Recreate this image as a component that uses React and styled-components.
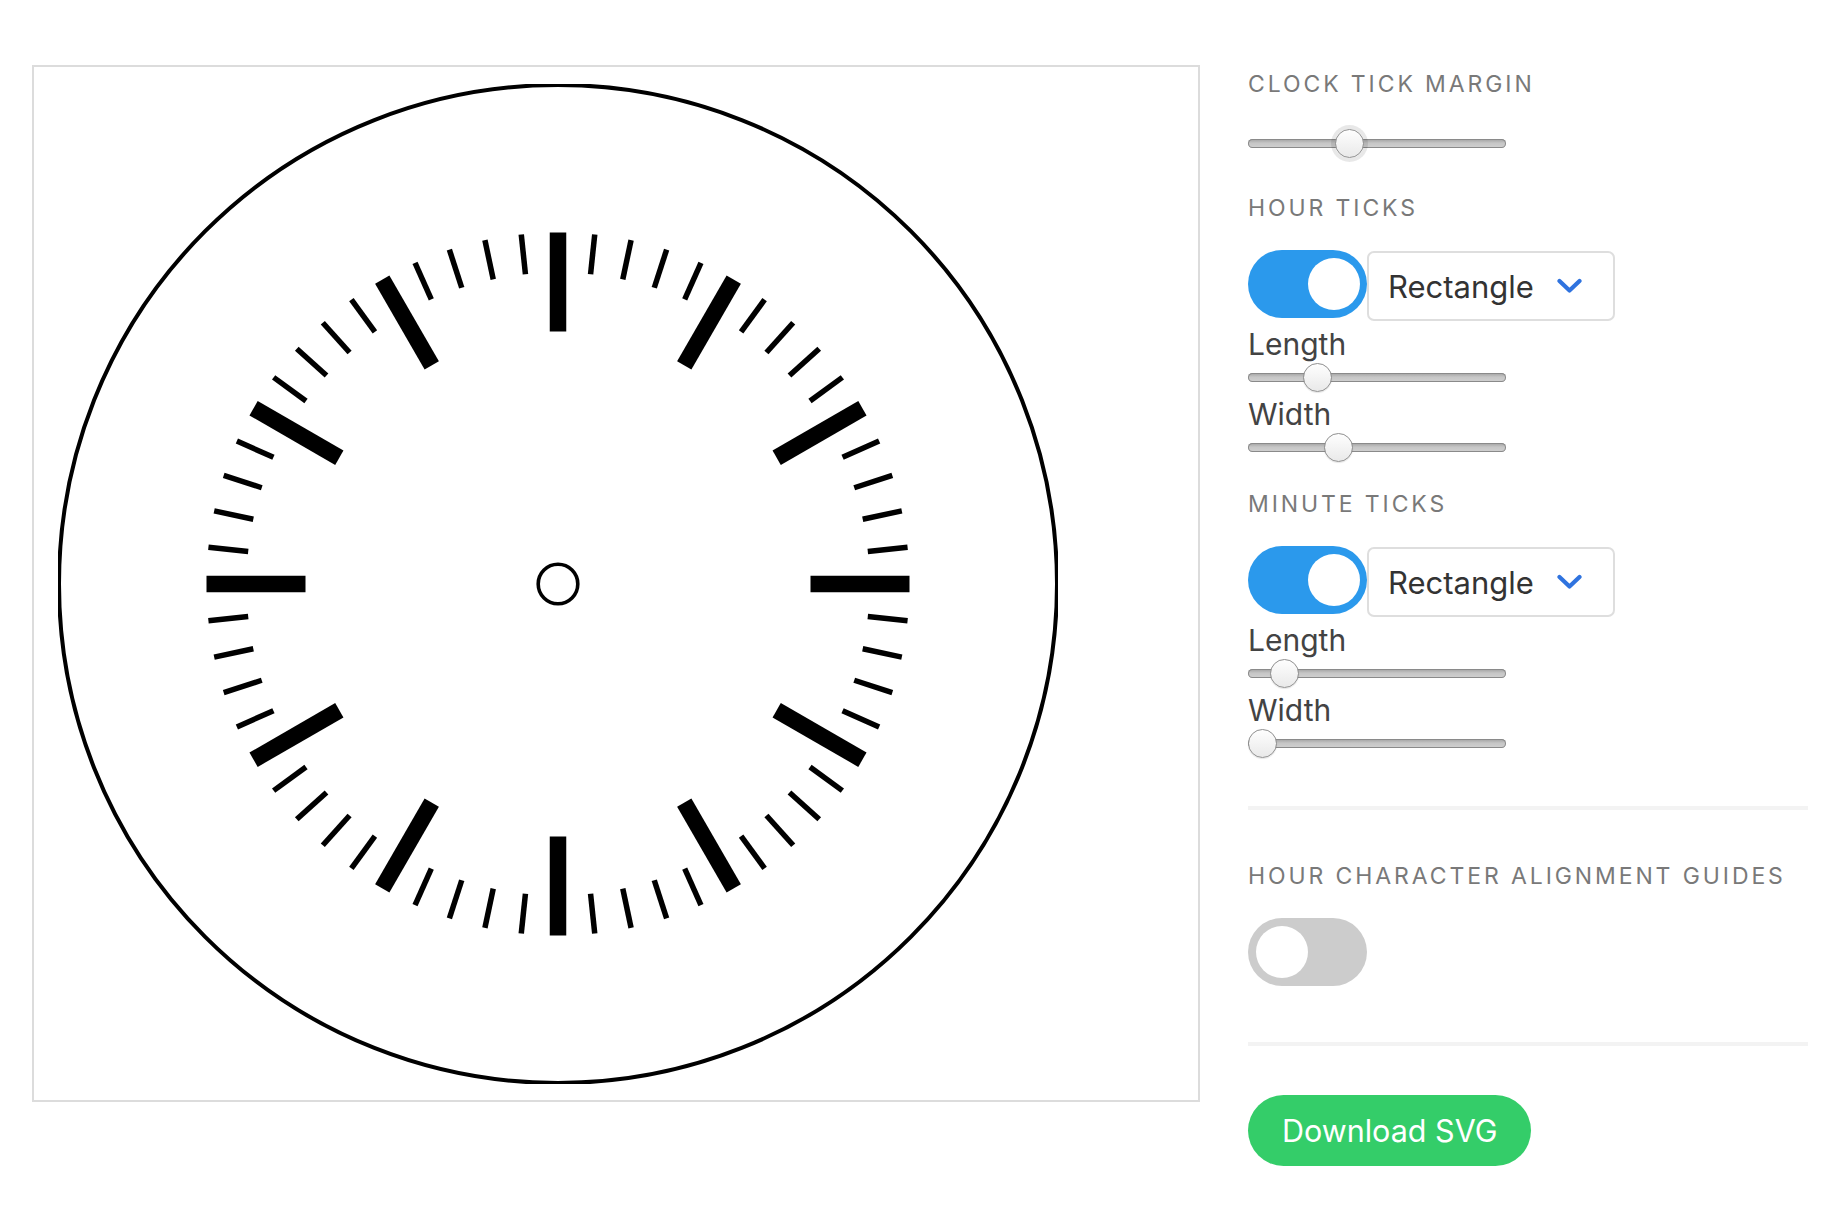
import React, { useState } from 'react';
import styled, { createGlobalStyle } from 'styled-components';

const GlobalStyle = createGlobalStyle`
  html, body {
    margin: 0;
    padding: 0;
    background: #fff;
  }
  body {
    font-family: Inter, "Helvetica Neue", "Liberation Sans", Arial, sans-serif;
    -webkit-font-smoothing: antialiased;
  }
`;

// Page: canvas on the left, controls on the right
const Page = styled.div`
  display: flex;
  align-items: flex-start;
  gap: 48px;
  padding: 65px 0 0 32px;
`;

const CanvasBox = styled.div`
  box-sizing: border-box;
  width: 1168px;
  height: 1037px;
  border: 2px solid #dcdcdc;
  display: flex;
  align-items: center;
  padding-left: 24px;
  flex-shrink: 0;
`;

const Sidebar = styled.div`
  display: flex;
  flex-direction: column;
  align-items: flex-start;
  width: 560px;
`;

const SectionLabel = styled.div`
  margin-top: ${p => p.$top}px;
  font-size: 23px;
  line-height: 28px;
  letter-spacing: 2.9px;
  color: #797979;
  text-transform: uppercase;
  white-space: nowrap;
`;

const FieldLabel = styled.div`
  margin-top: ${p => p.$top}px;
  font-size: 30px;
  line-height: 34px;
  color: #434343;
`;

const Range = styled.input.attrs({ type: 'range' })`
  -webkit-appearance: none;
  appearance: none;
  display: block;
  width: 258px;
  height: 30px;
  margin: ${p => p.$top}px 0 0 0;
  padding: 0;
  background: transparent;
  outline: none;

  &::-webkit-slider-runnable-track {
    height: 9px;
    border-radius: 5px;
    background: linear-gradient(#a0a0a0, #c6c6c6 45%, #d0d0d0);
    box-shadow: inset 0 0 0 1px #8a8a8a;
  }

  &::-webkit-slider-thumb {
    -webkit-appearance: none;
    appearance: none;
    box-sizing: border-box;
    width: 29px;
    height: 29px;
    margin-top: -10px;
    border-radius: 50%;
    background: linear-gradient(#fefefe, #e9e9e9);
    border: 1.5px solid #8f8f8f;
    box-shadow: ${p => (p.$focus ? '0 0 0 4px rgba(0,0,0,0.09)' : '0 1px 1px rgba(0,0,0,0.1)')};
  }
`;

const ControlRow = styled.div`
  display: flex;
  align-items: flex-start;
  margin-top: ${p => p.$top}px;
`;

const Toggle = styled.button`
  position: relative;
  box-sizing: border-box;
  width: 119px;
  height: 68px;
  margin-top: ${p => p.$top || 0}px;
  padding: 0;
  border: none;
  border-radius: 34px;
  background: ${p => (p.$on ? '#2b99ec' : '#cccccc')};
  cursor: pointer;
  flex-shrink: 0;

  &::after {
    content: '';
    position: absolute;
    top: 8px;
    left: ${p => (p.$on ? '60px' : '8px')};
    width: 52px;
    height: 52px;
    border-radius: 50%;
    background: #fff;
  }
`;

const SelectBox = styled.div`
  box-sizing: border-box;
  display: flex;
  align-items: center;
  justify-content: space-between;
  width: 248px;
  height: 70px;
  margin-top: 1px;
  padding: 0 31px 0 19px;
  border: 2px solid #dedede;
  border-radius: 7px;
  font-size: 31px;
  color: #333;
  background: #fff;
`;

const Divider = styled.hr`
  width: 560px;
  height: 4px;
  margin: ${p => p.$top}px 0 0 0;
  border: none;
  background: #f3f3f3;
`;

const DownloadButton = styled.button`
  margin-top: ${p => p.$top}px;
  height: 71px;
  padding: 0 34px;
  border: none;
  border-radius: 36px;
  background: #34cd69;
  color: #fff;
  font-family: inherit;
  font-size: 30.5px;
  cursor: pointer;
`;

function Chevron() {
  return (
    <svg width="25" height="16" viewBox="0 0 25 16">
      <path d="M2.5 3 L12.5 12.5 L22.5 3" fill="none" stroke="#2f73df" strokeWidth="4.2" strokeLinecap="round" strokeLinejoin="round" />
    </svg>
  );
}

function Clock({ margin, hour, minute }) {
  const outer = 500 - margin;
  const ticks = [];
  for (let i = 0; i < 60; i++) {
    const isHour = i % 5 === 0;
    const t = isHour && hour.on ? hour : minute;
    if (!t.on) continue;
    ticks.push(
      <rect
        key={i}
        x={500 - t.width / 2}
        y={500 - outer}
        width={t.width}
        height={t.length}
        transform={`rotate(${i * 6} 500 500)`}
      />
    );
  }
  return (
    <svg width="1000" height="1000" viewBox="0 0 1000 1000">
      <circle cx="500" cy="500" r="499" fill="none" stroke="#000" strokeWidth="4" />
      <g fill="#000">{ticks}</g>
      <circle cx="500" cy="500" r="19.8" fill="none" stroke="#000" strokeWidth="3.6" />
    </svg>
  );
}

export default function App() {
  const [margin, setMargin] = useState(148.5);
  const [hour, setHour] = useState({ on: true, length: 99, width: 16.5 });
  const [minute, setMinute] = useState({ on: true, length: 40, width: 5.5 });
  const [guides, setGuides] = useState(false);

  return (
    <>
      <GlobalStyle />
      <Page>
        <CanvasBox>
          <Clock margin={margin} hour={hour} minute={minute} />
        </CanvasBox>
        <Sidebar>
          <SectionLabel $top={5}>Clock Tick Margin</SectionLabel>
          <Range $top={30} $focus min={0} max={392} step={0.5} value={margin}
            onChange={e => setMargin(+e.target.value)} />

          <SectionLabel $top={36}>Hour Ticks</SectionLabel>
          <ControlRow $top={28}>
            <Toggle $on={hour.on} onClick={() => setHour({ ...hour, on: !hour.on })} />
            <SelectBox>Rectangle<Chevron /></SelectBox>
          </ControlRow>
          <FieldLabel $top={6}>Length</FieldLabel>
          <Range $top={1} min={0} max={410} step={0.5} value={hour.length}
            onChange={e => setHour({ ...hour, length: +e.target.value })} />
          <FieldLabel $top={5}>Width</FieldLabel>
          <Range $top={1} min={0} max={50} step={0.5} value={hour.width}
            onChange={e => setHour({ ...hour, width: +e.target.value })} />

          <SectionLabel $top={28}>Minute Ticks</SectionLabel>
          <ControlRow $top={28}>
            <Toggle $on={minute.on} onClick={() => setMinute({ ...minute, on: !minute.on })} />
            <SelectBox>Rectangle<Chevron /></SelectBox>
          </ControlRow>
          <FieldLabel $top={6}>Length</FieldLabel>
          <Range $top={1} min={0} max={410} step={0.5} value={minute.length}
            onChange={e => setMinute({ ...minute, length: +e.target.value })} />
          <FieldLabel $top={5}>Width</FieldLabel>
          <Range $top={1} min={5.5} max={50} step={0.5} value={minute.width}
            onChange={e => setMinute({ ...minute, width: +e.target.value })} />

          <Divider $top={48} />
          <SectionLabel $top={52}>Hour Character Alignment Guides</SectionLabel>
          <Toggle $top={28} $on={guides} onClick={() => setGuides(!guides)} />
          <Divider $top={56} />
          <DownloadButton $top={49}>Download SVG</DownloadButton>
        </Sidebar>
      </Page>
    </>
  );
}
